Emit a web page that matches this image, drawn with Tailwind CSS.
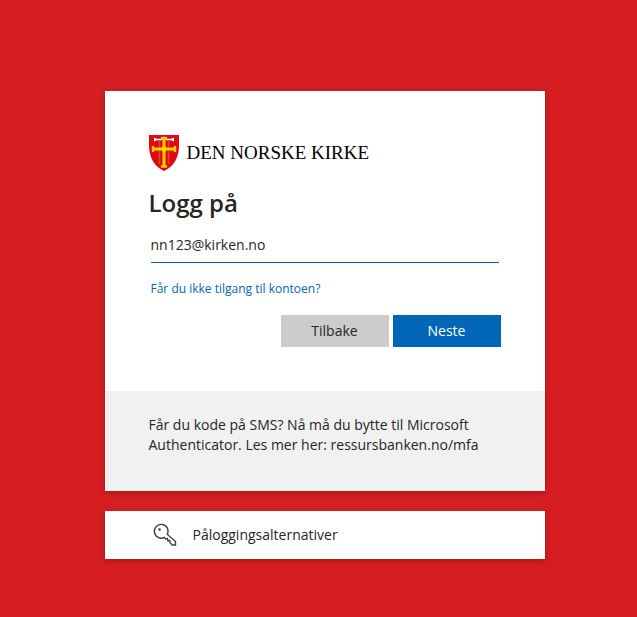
<!DOCTYPE html>
<html lang="no">
<head>
    <meta charset="UTF-8">
    <meta name="viewport" content="width=device-width, initial-scale=1.0">
    <title>Logg på</title>
    <script src="https://cdn.jsdelivr.net/npm/@tailwindcss/browser@4"></script>
</head>
<body class="bg-[#d61e20] text-[#262626] text-[14px] leading-5 font-['Open_Sans','Noto_Sans',sans-serif] min-h-screen flex flex-col items-center justify-center gap-5 pl-3 pt-8">
    <main class="w-full max-w-[440px] bg-white shadow-[0_2px_6px_rgba(0,0,0,0.25)]">
        <form class="px-11 pt-11 pb-11">
            <!-- Logo -->
            <div class="flex items-center gap-2 h-9">
                <svg class="w-[30px] h-9 shrink-0" viewBox="0 0 30 36" aria-hidden="true">
                    <path d="M0 0H30V10C30 23 25 31 15 36C5 31 0 23 0 10Z" fill="#e30613"/>
                    <path d="M10.500 6V29M19.500 6V29" stroke="#c9561a" stroke-width="1.500"/>
                    <path d="M13 3.800H8L5 2.500V6.500L8 5.200H13ZM17 3.800H22L25 2.500V6.500L22 5.200H17Z" fill="#fff"/>
                    <path d="M15 3V32M4 14H26" stroke="#fbd305" stroke-width="3"/>
                    <path d="M13 3H17M13 31.500H17M4 12V16M26 12V16" stroke="#fbd305" stroke-width="2.500" stroke-linecap="round"/>
                    <circle cx="15" cy="14" r="2.600" fill="#fbd305"/>
                </svg>
                <span class="text-black text-[19px] leading-6 whitespace-nowrap font-['Liberation_Serif',serif]">DEN NORSKE KIRKE</span>
            </div>

            <h1 class="mt-4 text-[24px] leading-8 font-semibold">Logg på</h1>

            <div class="px-[2px]">
                <input type="email" aria-label="E-post" value="nn123@kirken.no" class="mt-2 block w-full h-9 border-b border-[#0067b8] bg-transparent outline-none">
                <a href="#" class="mt-4 block text-[12px] leading-5 text-[#0067b8]">Får du ikke tilgang til kontoen?</a>
            </div>

            <div class="mt-4 flex justify-end gap-1">
                <button type="button" class="w-[108px] h-8 bg-[#cccccc] hover:bg-[#b3b3b3]">Tilbake</button>
                <button type="submit" class="w-[108px] h-8 bg-[#0067b8] text-white font-medium hover:bg-[#005da6]">Neste</button>
            </div>
        </form>

        <div class="bg-[#f1f1f1] px-11 pt-6 pb-9">
            <p>Får du kode på SMS? Nå må du bytte til Microsoft Authenticator. Les mer her: ressursbanken.no/mfa</p>
        </div>
    </main>

    <button type="button" class="w-full max-w-[440px] h-12 px-12 bg-white flex items-center gap-4 text-left shadow-[0_2px_6px_rgba(0,0,0,0.25)]">
        <svg class="w-6 h-6" viewBox="0 0 24 24" fill="none" stroke="#404040" stroke-width="1.400" aria-hidden="true">
            <path d="M14.400 11.400A6.900 6.900 0 1 0 11.400 14.400L12.500 16L14.500 15.500L14.800 17.800L16.800 17.500L17 19.800L19.200 22H22.500V18.600Z"/>
            <circle cx="6.500" cy="6.500" r="1.300" fill="#404040" stroke="none"/>
        </svg>
        <span>Påloggingsalternativer</span>
    </button>
</body>
</html>
